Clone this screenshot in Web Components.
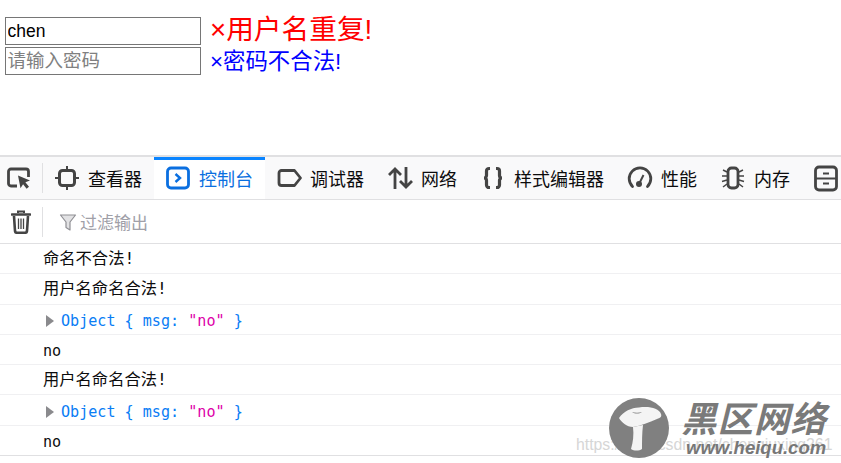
<!DOCTYPE html>
<html lang="zh">
<head>
<meta charset="utf-8">
<title>console</title>
<style>
  html, body { margin: 0; padding: 0; background: #fff; }
  body { width: 841px; height: 463px; overflow: hidden; position: relative; font-family: "Liberation Sans", "Noto Sans CJK SC", sans-serif; }
</style>
</head>
<body>
<login-form></login-form>
<dev-tabs></dev-tabs>
<filter-bar></filter-bar>
<console-list>
  <console-row cjk>命名不合法!</console-row>
  <console-row cjk>用户名命名合法!</console-row>
  <console-row object></console-row>
  <console-row>no</console-row>
  <console-row cjk>用户名命名合法!</console-row>
  <console-row object></console-row>
  <console-row last>no</console-row>
</console-list>
<site-mark></site-mark>

<script>
const CJK = `"Liberation Sans", "Noto Sans CJK SC", sans-serif`;

class LoginForm extends HTMLElement {
  constructor() {
    super();
    this.attachShadow({ mode: "open" });
  }

  connectedCallback() {
    this.shadowRoot.innerHTML = `
      <style>
        :host { display: block; height: 155px; box-sizing: border-box; padding: 16px 0 0 5px; font-family: ${CJK}; }
        .line { display: flex; align-items: center; height: 30px; }
        input {
          width: 196px; height: 28px; box-sizing: border-box; margin: 0; padding: 0 1.500px;
          border: 1.400px solid #767676; border-radius: 0; outline: none; background: #fff;
          font: 17.500px ${CJK}; color: #000;
        }
        input::placeholder { color: #808080; opacity: 1; font-size: 18.500px; }
        .msg { margin-left: 9px; white-space: nowrap; }
        .red { color: #f00; font-size: 27.700px; margin-top: -9px; }
        .blue { color: #00f; font-size: 22.400px; margin-top: -4px; }
      </style>
      <div class="line"><input value="chen"><span class="msg red">×用户名重复!</span></div>
      <div class="line"><input placeholder="请输入密码"><span class="msg blue">×密码不合法!</span></div>
    `;
  }
}

const ICONS = {
  pick: `<path d="M11 20H5a2.500 2.500 0 0 1-2.500-2.500v-12A2.500 2.500 0 0 1 5 3h15a2.500 2.500 0 0 1 2.500 2.500V11" fill="none" stroke-width="2.800"/><path d="M12 9.500l12 5-4.600 1.800 3.600 4.400-2.400 2-3.500-4.400-2.600 4z" stroke="none" class="fill"/>`,
  frame: `<rect x="4.500" y="4.500" width="15" height="15" rx="3" fill="none" stroke-width="3"/><path d="M12 0v4M12 20v4M0 12h4M20 12h4" fill="none" stroke-width="2"/>`,
  console: `<rect x="1.500" y="2" width="21" height="20" rx="3.500" fill="none" stroke-width="2.800"/><path d="M9.500 8l4.500 4-4.500 4" fill="none" stroke-width="2.400"/>`,
  debug: `<path d="M4.500 4.500h13l6 7.500-6 7.500h-13A2.500 2.500 0 0 1 2 17V7a2.500 2.500 0 0 1 2.500-2.500z" fill="none" stroke-width="2.800" stroke-linejoin="round"/>`,
  net: `<path d="M7 23V3M1 9l6-6 6 6" fill="none" stroke-width="2.800"/><path d="M18 1v20M12 15l6 6 6-6" fill="none" stroke-width="2.800"/>`,
  style: `<path d="M9 2.500H8a2.500 2.500 0 0 0-2.500 2.500v4.500a2.500 2.500 0 0 1-2.500 2.500 2.500 2.500 0 0 1 2.500 2.500v4.500a2.500 2.500 0 0 0 2.500 2.500h1M15 2.500h1a2.500 2.500 0 0 1 2.500 2.500v4.500a2.500 2.500 0 0 0 2.500 2.500 2.500 2.500 0 0 0-2.500 2.500v4.500a2.500 2.500 0 0 1-2.500 2.500h-1" fill="none" stroke-width="3.200"/>`,
  perf: `<path d="M4.500 20.500A10.800 10.800 0 1 1 19.500 20.500" fill="none" stroke-width="2.800" stroke-linecap="round"/><circle cx="11" cy="18" r="3" class="fill" stroke="none"/><path d="M11.500 17L15.500 9" fill="none" stroke-width="2"/>`,
  mem: `<rect x="7" y="2" width="10" height="20" rx="3.500" fill="none" stroke-width="2.800"/><path d="M6 6L2 4M6 10H1M6 14L1 15.500M6 18L2 21M18 6l4-2M18 10h5M18 14l5 1.500M18 18l4 3" fill="none" stroke-width="1.500"/>`,
  store: `<rect x="1.500" y="1" width="21" height="23" rx="3.500" fill="none" stroke-width="2.800"/><path d="M2 12.500h20M9 7.500h6M9 17.500h6" fill="none" stroke-width="2"/>`
};

class DevIcon extends HTMLElement {
  constructor() {
    super();
    this.attachShadow({ mode: "open" });
  }

  connectedCallback() {
    this.shadowRoot.innerHTML = `
      <style>
        :host { display: block; width: 24px; height: 24px; flex: none; color: #444; }
        svg { display: block; width: 24px; height: 24px; stroke: currentColor; overflow: visible; }
        .fill { fill: currentColor; }
      </style>
      <svg viewBox="0 0 24 24">${ICONS[this.getAttribute("name")]}</svg>
    `;
  }
}

class DevTab extends HTMLElement {
  constructor() {
    super();
    this.attachShadow({ mode: "open" });
  }

  connectedCallback() {
    const name = this.getAttribute("icon");
    this.shadowRoot.innerHTML = `
      <style>
        :host { display: flex; align-items: center; gap: 9px; height: 100%; box-sizing: border-box; padding: 0 12px; flex: none; color: #0c0c0d; font-size: 18px; position: relative; }
        :host([selected]) { color: #0a6fe0; background: #fff; }
        :host([selected])::before { content: ""; position: absolute; left: 0; right: 0; top: 0; height: 3px; background: #0a84ff; }
        :host([selected]) dev-icon { color: #0a6fe0; }
      </style>
      <dev-icon name="${name}"></dev-icon><slot></slot>
    `;
  }
}

class DevTabs extends HTMLElement {
  constructor() {
    super();
    this.attachShadow({ mode: "open" });
  }

  connectedCallback() {
    this.shadowRoot.innerHTML = `
      <style>
        :host { display: flex; height: 45px; box-sizing: border-box; align-items: stretch; background: #f9f9fa; border-top: 2px solid #e0e0e2; border-bottom: 1.500px solid #e0e0e2; overflow: hidden; font-family: ${CJK}; }
        .pick { display: flex; align-items: center; padding: 0 0 0 6px; width: 42px; box-sizing: border-box; flex: none; }
        .sep { width: 1px; height: 30px; background: #e0e0e2; align-self: center; flex: none; }
      </style>
      <div class="pick"><dev-icon name="pick"></dev-icon></div>
      <div class="sep"></div>
      <dev-tab icon="frame">查看器</dev-tab>
      <dev-tab icon="console" selected>控制台</dev-tab>
      <dev-tab icon="debug">调试器</dev-tab>
      <dev-tab icon="net">网络</dev-tab>
      <dev-tab icon="style">样式编辑器</dev-tab>
      <dev-tab icon="perf">性能</dev-tab>
      <dev-tab icon="mem">内存</dev-tab>
      <dev-tab icon="store"></dev-tab>
    `;
  }
}

class FilterBar extends HTMLElement {
  constructor() {
    super();
    this.attachShadow({ mode: "open" });
  }

  connectedCallback() {
    this.shadowRoot.innerHTML = `
      <style>
        :host { display: flex; align-items: center; height: 44px; box-sizing: border-box; border-bottom: 1.500px solid #e0e0e2; font-family: ${CJK}; background: #fff; }
        .trash { width: 42px; flex: none; display: flex; justify-content: center; }
        .trash svg { display: block; width: 20px; height: 24px; }
        .sep { width: 1px; height: 30px; background: #e0e0e2; flex: none; }
        .filter { display: flex; align-items: center; gap: 3px; margin-left: 16px; color: #a0a0a8; font-size: 17px; }
        .filter svg { width: 18px; height: 18px; display: block; }
      </style>
      <div class="trash">
        <svg viewBox="0 0 20 24"><path d="M7 3V1.500h6V3" fill="none" stroke="#444" stroke-width="2"/><path d="M1 4.500h18" stroke="#444" stroke-width="2.600" stroke-linecap="round"/><path d="M3 6l1 15a2 2 0 0 0 2 1.800h8a2 2 0 0 0 2-1.800l1-15" fill="none" stroke="#444" stroke-width="2.600"/><path d="M7.500 8.500v10.500M10 8.500v10.500M12.500 8.500v10.500" stroke="#444" stroke-width="1.300"/></svg>
      </div>
      <div class="sep"></div>
      <div class="filter">
        <svg viewBox="0 0 18 18"><path d="M1.500 2h15l-5.500 7v8l-4-2.500V9z" fill="#e2e2e4" stroke="#8f8f94" stroke-width="1.200" stroke-linejoin="round"/></svg>
        <span>过滤输出</span>
      </div>
    `;
  }
}

class ConsoleList extends HTMLElement {
  constructor() {
    super();
    this.attachShadow({ mode: "open" });
  }

  connectedCallback() {
    this.shadowRoot.innerHTML = `
      <style>:host { display: block; }</style>
      <slot></slot>
    `;
  }
}

class ConsoleRow extends HTMLElement {
  constructor() {
    super();
    this.attachShadow({ mode: "open" });
  }

  connectedCallback() {
    const body = this.hasAttribute("object")
      ? `<span class="arrow"></span><span class="obj">Object { msg: <span class="str">"no"</span> }</span>`
      : `<slot></slot>`;
    this.shadowRoot.innerHTML = `
      <style>
        :host { display: flex; align-items: center; height: 30.300px; box-sizing: border-box; padding: 2px 0 0 43px; border-bottom: 1px solid #f0f0f2; color: #0c0c0d; font: 15.100px "DejaVu Sans Mono", "Noto Sans CJK SC", monospace; }
        :host([cjk]) { font-size: 16.300px; padding: 0 0 3px 43px; }
        :host([object]) { padding: 4px 0 0 43px; }
        :host([last]) { border-bottom: 1.500px solid #e0e0e2; padding-top: 4px; }
        .arrow { width: 0; height: 0; border-left: 8px solid #8a8a8d; border-top: 6px solid transparent; border-bottom: 6px solid transparent; margin: 0 7px 0 3px; }
        .obj { color: #0a7df5; white-space: pre; }
        .str { color: #dd00a9; }
      </style>
      ${body}
    `;
  }
}

class SiteMark extends HTMLElement {
  constructor() {
    super();
    this.attachShadow({ mode: "open" });
  }

  connectedCallback() {
    this.shadowRoot.innerHTML = `
      <style>
        :host { position: absolute; left: 0; top: 0; width: 841px; height: 463px; pointer-events: none; font-family: "Liberation Sans", "Noto Sans CJK SC", sans-serif; }
        .url { position: absolute; left: 576px; top: 436px; font-size: 15.800px; color: #d6d6d6; white-space: nowrap; }
        svg { position: absolute; left: 609px; top: 398px; width: 60px; height: 60px; }
        .cn { position: absolute; left: 681px; top: 397px; font-size: 35.500px; font-weight: 700; font-style: italic; color: #7a7a7a; letter-spacing: 1px; white-space: nowrap; line-height: 46px; }
        .www { position: absolute; left: 686px; top: 437px; font-size: 18.500px; font-weight: 700; font-style: italic; color: #777; white-space: nowrap; }
      </style>
      <span class="url">https://blog.csdn.net/chenqiuxing261</span>
      <svg viewBox="0 0 60 60">
        <circle cx="30" cy="30" r="30" fill="#808080"/>
        <path d="M10 20C15 13 22 10 30 9.500 40 8 50 10 52 16c1 3-1 4-4 5-8 3-16 7-24 8-6 0-12-5-14-9z" fill="#f4f4f4"/>
        <path d="M24 29l10-2c-1 8-1 16-1 24-3 2-8 2-11 0 2-7 3-14 2-22z" fill="#f4f4f4"/>
        <path d="M23 14c3 1 7 1 10 0-3 2-7 2-10 0z" fill="#808080"/>
      </svg>
      <span class="cn">黑区网络</span>
      <span class="www">www.heiqu.com</span>
    `;
  }
}

customElements.define("login-form", LoginForm);
customElements.define("dev-icon", DevIcon);
customElements.define("dev-tab", DevTab);
customElements.define("dev-tabs", DevTabs);
customElements.define("filter-bar", FilterBar);
customElements.define("console-list", ConsoleList);
customElements.define("console-row", ConsoleRow);
customElements.define("site-mark", SiteMark);
</script>
</body>
</html>
